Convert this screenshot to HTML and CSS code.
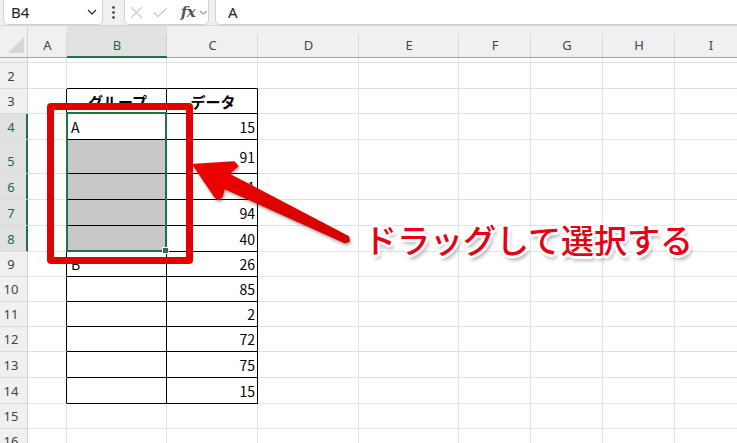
FILE: index.html
```html
<!DOCTYPE html>
<html lang="ja">
<head>
<meta charset="utf-8">
<link rel="stylesheet" href="styles.css">
</head>
<body>
<div class="page">
  <div class="fbar">
    <div class="box namebox">
      <span>B4</span>
      <svg class="chev" width="10" height="6" viewBox="0 0 10 6"><path d="M1 1 L5 5 L9 1" fill="none" stroke="#333" stroke-width="1.3"/></svg>
    </div>
    <div class="dots">
      <svg width="3" height="13" viewBox="0 0 3 13"><circle cx="1.5" cy="1.5" r="1.3" fill="#333"/><circle cx="1.5" cy="6.5" r="1.3" fill="#333"/><circle cx="1.5" cy="11.5" r="1.3" fill="#333"/></svg>
    </div>
    <div class="box fxbox">
      <svg width="13" height="13" viewBox="0 0 13 13"><path d="M1 1 L12 12 M12 1 L1 12" stroke="#c4c4c4" stroke-width="1.2" fill="none"/></svg>
      <svg class="check" width="15" height="11" viewBox="0 0 15 11"><path d="M1 5.5 L5 9.8 L14 1" stroke="#c4c4c4" stroke-width="1.2" fill="none"/></svg>
      <span class="fx">fx</span>
      <svg class="chev2" width="9" height="5" viewBox="0 0 9 5"><path d="M1 1 L4.5 4 L8 1" fill="none" stroke="#9a9a9a" stroke-width="1.1"/></svg>
    </div>
    <div class="box finput">A</div>
  </div>

  <div class="grid">
    <!-- header -->
    <div class="corner"><svg width="17" height="16" viewBox="0 0 17 16"><path d="M16 0 L16 16 L0 16 Z" fill="#d6d6d6"/></svg></div>
    <div class="ch">A</div><div class="ch sel">B</div><div class="ch">C</div><div class="ch">D</div><div class="ch">E</div><div class="ch">F</div><div class="ch">G</div><div class="ch">H</div><div class="ch">I</div>
    <!-- row 1 -->
    <div class="rh"></div><div class="c"></div><div class="c"></div><div class="c"></div><div class="c"></div><div class="c"></div><div class="c"></div><div class="c"></div><div class="c"></div><div class="c"></div>
    <!-- row 2 -->
    <div class="rh">2</div><div class="c"></div><div class="c at"></div><div class="c at"></div><div class="c"></div><div class="c"></div><div class="c"></div><div class="c"></div><div class="c"></div><div class="c"></div>
    <!-- row 3 -->
    <div class="rh">3</div><div class="c al"></div><div class="c tb hd">グループ</div><div class="c tb hd">データ</div><div class="c"></div><div class="c"></div><div class="c"></div><div class="c"></div><div class="c"></div><div class="c"></div>
    <!-- row 4 -->
    <div class="rh sel">4</div><div class="c al"></div><div class="c tb">A</div><div class="c tb num">15</div><div class="c"></div><div class="c"></div><div class="c"></div><div class="c"></div><div class="c"></div><div class="c"></div>
    <!-- row 5 -->
    <div class="rh sel">5</div><div class="c al"></div><div class="c tb gy"></div><div class="c tb num">91</div><div class="c"></div><div class="c"></div><div class="c"></div><div class="c"></div><div class="c"></div><div class="c"></div>
    <!-- row 6 -->
    <div class="rh sel">6</div><div class="c al"></div><div class="c tb gy"></div><div class="c tb num">81</div><div class="c"></div><div class="c"></div><div class="c"></div><div class="c"></div><div class="c"></div><div class="c"></div>
    <!-- row 7 -->
    <div class="rh sel">7</div><div class="c al"></div><div class="c tb gy"></div><div class="c tb num">94</div><div class="c"></div><div class="c"></div><div class="c"></div><div class="c"></div><div class="c"></div><div class="c"></div>
    <!-- row 8 -->
    <div class="rh sel">8</div><div class="c al"></div><div class="c tb gy"></div><div class="c tb num">40</div><div class="c"></div><div class="c"></div><div class="c"></div><div class="c"></div><div class="c"></div><div class="c"></div>
    <!-- row 9 -->
    <div class="rh">9</div><div class="c al"></div><div class="c tb">B</div><div class="c tb num">26</div><div class="c"></div><div class="c"></div><div class="c"></div><div class="c"></div><div class="c"></div><div class="c"></div>
    <!-- row 10 -->
    <div class="rh">10</div><div class="c al"></div><div class="c tb"></div><div class="c tb num">85</div><div class="c"></div><div class="c"></div><div class="c"></div><div class="c"></div><div class="c"></div><div class="c"></div>
    <!-- row 11 -->
    <div class="rh">11</div><div class="c al"></div><div class="c tb"></div><div class="c tb num">2</div><div class="c"></div><div class="c"></div><div class="c"></div><div class="c"></div><div class="c"></div><div class="c"></div>
    <!-- row 12 -->
    <div class="rh">12</div><div class="c al"></div><div class="c tb"></div><div class="c tb num">72</div><div class="c"></div><div class="c"></div><div class="c"></div><div class="c"></div><div class="c"></div><div class="c"></div>
    <!-- row 13 -->
    <div class="rh">13</div><div class="c al"></div><div class="c tb"></div><div class="c tb num">75</div><div class="c"></div><div class="c"></div><div class="c"></div><div class="c"></div><div class="c"></div><div class="c"></div>
    <!-- row 14 -->
    <div class="rh">14</div><div class="c al"></div><div class="c tb"></div><div class="c tb num">15</div><div class="c"></div><div class="c"></div><div class="c"></div><div class="c"></div><div class="c"></div><div class="c"></div>
    <!-- row 15 -->
    <div class="rh">15</div><div class="c"></div><div class="c"></div><div class="c"></div><div class="c"></div><div class="c"></div><div class="c"></div><div class="c"></div><div class="c"></div><div class="c"></div>
    <!-- row 16 -->
    <div class="rh">16</div><div class="c"></div><div class="c"></div><div class="c"></div><div class="c"></div><div class="c"></div><div class="c"></div><div class="c"></div><div class="c"></div><div class="c"></div>
  </div>

  <div class="selection"><div class="handle"></div></div>
  <div class="redbox"></div>
  <svg class="arrow" width="175" height="95" viewBox="185 155 175 95">
    <defs>
      <linearGradient id="ag" x1="194" y1="165" x2="348" y2="240" gradientUnits="userSpaceOnUse">
        <stop offset="0" stop-color="#f20000"/>
        <stop offset="0.5" stop-color="#e00000"/>
        <stop offset="1" stop-color="#d40000"/>
      </linearGradient>
    </defs>
    <path d="M194 165 L234 162.5 L237 166 L227.5 174 L348 237 L348.5 241 L345 242 L224 187.5 L221.5 196.5 L218 199 L215 196 Z" fill="url(#ag)" stroke="url(#ag)" stroke-width="2.5" stroke-linejoin="round"/>
  </svg>
  <div class="label">ドラッグして選択する</div>
</div>
</body>
</html>
```

FILE: styles.css
```css
html, body {
  margin: 0;
  padding: 0;
  background: #fff;
}
body {
  width: 737px;
  height: 443px;
  overflow: hidden;
  font-family: "Noto Sans", "Noto Sans CJK JP", sans-serif;
}
.page {
  position: relative;
  width: 737px;
  height: 443px;
  overflow: hidden;
}

/* formula bar */
.fbar {
  display: flex;
  align-items: flex-start;
  height: 26px;
  box-sizing: border-box;
  background: #f0f0f0;
  border-bottom: 1px solid #d4d4d4;
}
.box {
  height: 25px;
  box-sizing: border-box;
  background: #fff;
  border: 1px solid #d3d3d3;
  border-top: none;
  border-radius: 0 0 5px 5px;
  display: flex;
  align-items: center;
}
.namebox {
  margin-left: 3px;
  width: 100px;
  padding: 0 5px 0 7px;
  justify-content: space-between;
  font-size: 15px;
  color: #222;
}
.dots {
  width: 21px;
  height: 25px;
  display: flex;
  align-items: center;
  justify-content: center;
}
.fxbox {
  width: 85px;
  padding-left: 5px;
}
.check {
  margin-left: 10px;
}
.fx {
  margin-left: 13px;
  font-family: "DejaVu Serif", "Liberation Serif", serif;
  font-style: italic;
  font-weight: bold;
  font-size: 15px;
  color: #555;
  letter-spacing: -0.5px;
}
.chev2 {
  margin-left: 4px;
}
.finput {
  margin-left: 6px;
  flex: 1;
  margin-right: -10px;
  padding-left: 12px;
  font-size: 15px;
  color: #222;
}

/* grid */
.grid {
  display: grid;
  grid-template-columns: 28px 39px 100px 91px 101px 100px 72px 72px 72px 72px;
  grid-template-rows: 32px 5px 26px 25px 26px 34px 26px 26px 26px 25px 25px 25px 25px 26px 26px 25px 25px;
  width: 747px;
}
.grid > div {
  box-sizing: border-box;
}
.corner {
  background: #f0f0f0;
  border-right: 1px solid #d4d4d4;
  border-bottom: 1px solid #a3a3a3;
  display: flex;
  align-items: flex-end;
  padding: 0 0 4px 8px;
}
.ch {
  background: linear-gradient(#d8d8d8, #d8d8d8) right bottom / 1px 23px no-repeat, #f0f0f0;
  border-bottom: 1px solid #a3a3a3;
  display: flex;
  align-items: center;
  justify-content: center;
  padding-top: 6px;
  font-size: 13px;
  color: #444;
}
.ch.sel {
  background: linear-gradient(#d0d0d0, #d0d0d0) right bottom / 1px 23px no-repeat, #e1e1e1;
  border-bottom: 2px solid #217346;
  color: #1e6b3e;
  padding-top: 7px;
}
.rh {
  background: #f0f0f0;
  border-right: 1px solid #d0d0d0;
  border-bottom: 1px solid #dadada;
  display: flex;
  align-items: flex-end;
  justify-content: center;
  padding: 0 5px 3px 0;
  font-size: 13px;
  line-height: 17px;
  color: #444;
  overflow: hidden;
}
.rh.sel {
  background: #e1e1e1;
  color: #1e6b3e;
  border-right-color: #217346;
  box-shadow: inset -1px 0 0 #217346;
}
.c {
  border-right: 1px solid #e1e1e1;
  border-bottom: 1px solid #e1e1e1;
  display: flex;
  align-items: center;
  padding: 0 2px 0 4px;
  font-family: "Noto Sans CJK JP", sans-serif;
  font-size: 14px;
  color: #000;
  white-space: nowrap;
}
.c.at {
  border-bottom-color: #000;
}
.c.al {
  border-right-color: #000;
}
.c.tb {
  border-right-color: #000;
  border-bottom-color: #000;
}
.c.gy {
  background: #c8c8c8;
}
.c.num {
  justify-content: flex-end;
}
.c.hd {
  justify-content: center;
  font-weight: bold;
  font-size: 15px;
}

/* overlays */
.selection {
  position: absolute;
  left: 66px;
  top: 112px;
  width: 101px;
  height: 140px;
  box-sizing: border-box;
  border: 2px solid #217346;
}
.handle {
  position: absolute;
  right: -4px;
  bottom: -4px;
  width: 5px;
  height: 5px;
  background: #217346;
  border: 1px solid #fff;
}
.redbox {
  position: absolute;
  left: 47px;
  top: 103px;
  width: 146px;
  height: 161px;
  box-sizing: border-box;
  border: 7px solid #e30000;
  border-radius: 4px;
}
.arrow {
  position: absolute;
  left: 185px;
  top: 155px;
  filter: drop-shadow(1px 2px 1.5px rgba(0, 0, 0, 0.35));
}
.label {
  position: absolute;
  left: 364px;
  top: 223px;
  font-family: "Noto Sans CJK JP", sans-serif;
  font-size: 33px;
  line-height: 33px;
  font-weight: 500;
  color: #e60012;
  white-space: nowrap;
  text-shadow:
    2px 0 0 #fff, -2px 0 0 #fff, 0 2px 0 #fff, 0 -2px 0 #fff,
    2px 2px 0 #fff, -2px -2px 0 #fff, 2px -2px 0 #fff, -2px 2px 0 #fff,
    3px 0 1px #fff, -3px 0 1px #fff, 0 3px 1px #fff, 0 -3px 1px #fff,
    2px 4px 4px rgba(0, 0, 0, 0.45);
}
```
